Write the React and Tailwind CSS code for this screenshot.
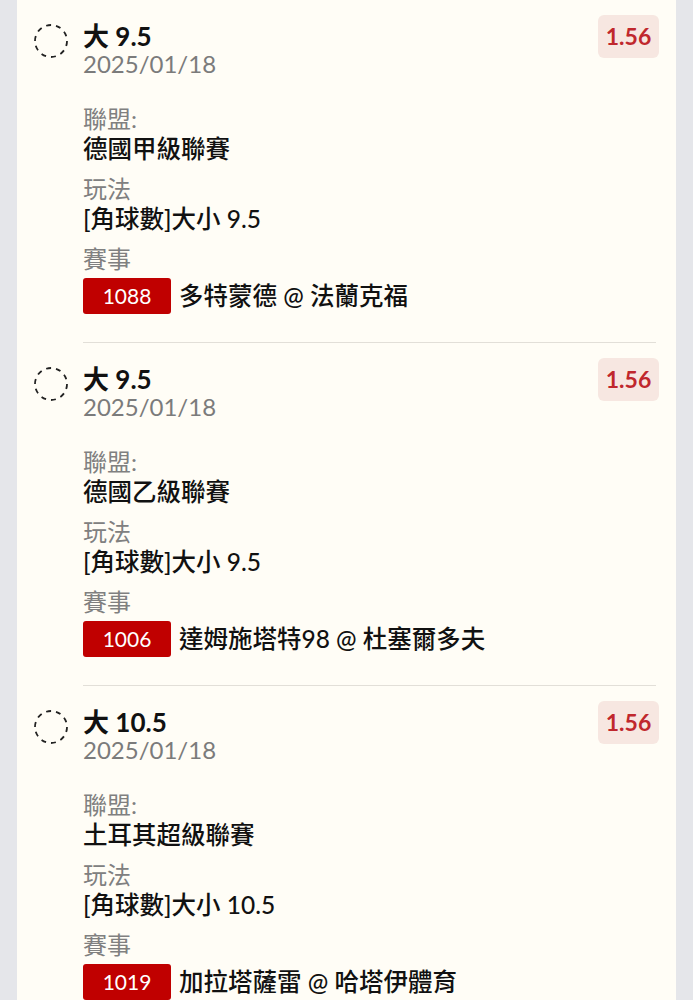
import React from "react";

const items = [
  { title: "大 9.5", date: "2025/01/18", odds: "1.56", league: "德國甲級聯賽", play: "[角球數]大小 9.5", code: "1088", match: "多特蒙德 @ 法蘭克福" },
  { title: "大 9.5", date: "2025/01/18", odds: "1.56", league: "德國乙級聯賽", play: "[角球數]大小 9.5", code: "1006", match: "達姆施塔特98 @ 杜塞爾多夫" },
  { title: "大 10.5", date: "2025/01/18", odds: "1.56", league: "土耳其超級聯賽", play: "[角球數]大小 10.5", code: "1019", match: "加拉塔薩雷 @ 哈塔伊體育" },
];

function DashedCircle() {
  return (
    <svg width="34" height="34" viewBox="0 0 34 34" className="shrink-0 mt-[2px]">
      <circle cx="17" cy="17" r="16" fill="none" stroke="#222" strokeWidth="1.8" strokeDasharray="5 5" />
    </svg>
  );
}

function Item({ it, last }) {
  return (
    <div className="flex pl-[17px] pr-[20px] pt-[22px]">
      <DashedCircle />
      <div className={"ml-[15px] flex-1 pb-[28px] " + (last ? "" : "border-b border-[#e2dfd8]")}>
        <div className="flex justify-between items-start">
          <div>
            <div className="text-[26px] leading-[28px] font-bold text-[#111]">{it.title}</div>
            <div className="text-[24px] leading-[28px] text-[#7b7b7b]">{it.date}</div>
          </div>
          <div className="-mt-[7px] -mr-[3px] w-[61px] h-[43px] rounded-[6px] bg-[#f7e7e1] flex items-center justify-center text-[23px] font-bold text-[#c0282d]">
            {it.odds}
          </div>
        </div>
        <div className="mt-[26px] flex flex-col gap-[10px]">
          <div>
            <div className="text-[24px] leading-[30px] text-[#808080]">聯盟:</div>
            <div className="text-[24.5px] leading-[30px] font-medium text-[#111]">{it.league}</div>
          </div>
          <div>
            <div className="text-[24px] leading-[30px] text-[#808080]">玩法</div>
            <div className="text-[24.5px] leading-[30px] font-medium text-[#111]">{it.play}</div>
          </div>
          <div>
            <div className="text-[24px] leading-[30px] text-[#808080]">賽事</div>
            <div className="mt-[4px] flex items-center">
              <div className="w-[88px] h-[36px] rounded-[3px] bg-[#c00000] text-white text-[21px] flex items-center justify-center">
                {it.code}
              </div>
              <div className="ml-[8px] text-[24.5px] leading-[30px] font-medium text-[#111]">{it.match}</div>
            </div>
          </div>
        </div>
      </div>
    </div>
  );
}

export default function App() {
  return (
    <div className="min-h-screen bg-[#e5e6ea] px-[17px] font-['Lato','Noto_Sans_CJK_TC',sans-serif]">
      <div className="bg-[#fffdf6] min-h-screen">
        {items.map((it, i) => (
          <Item key={i} it={it} last={i === items.length - 1} />
        ))}
      </div>
    </div>
  );
}
